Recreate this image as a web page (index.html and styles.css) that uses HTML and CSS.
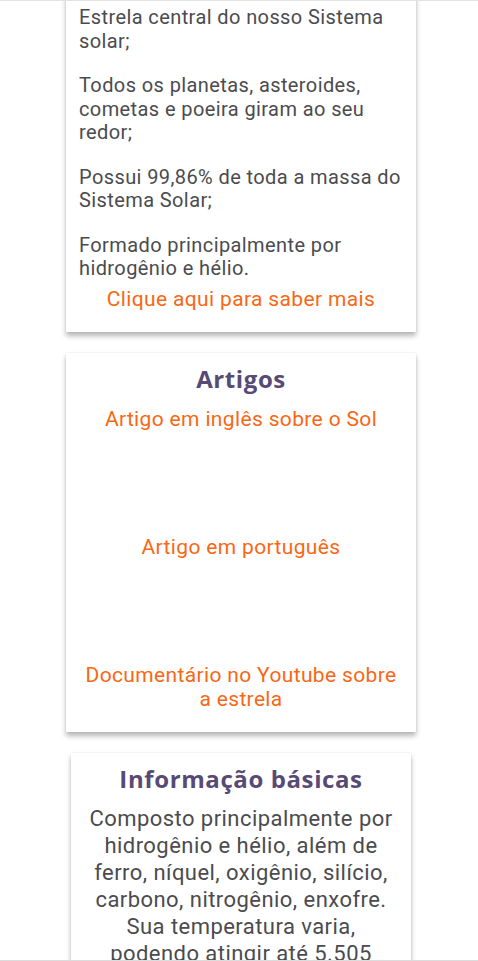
FILE: index.html
```html
<!DOCTYPE html>
<html lang="pt-BR">
<head>
<meta charset="utf-8">
<title>Sol</title>
<link rel="stylesheet" href="styles.css">
</head>
<body>
<main class="page">
  <section class="card card-facts">
    <p>Estrela central do nosso Sistema solar;</p>
    <p>Todos os planetas, asteroides, cometas e poeira giram ao seu redor;</p>
    <p>Possui 99,86% de toda a massa do Sistema Solar;</p>
    <p>Formado principalmente por hidrogênio e hélio.</p>
    <a class="link more" href="#">Clique aqui para saber mais</a>
  </section>

  <section class="card card-articles">
    <h2 class="title">Artigos</h2>
    <ul class="articles">
      <li><a class="link" href="#">Artigo em inglês sobre o Sol</a></li>
      <li><a class="link" href="#">Artigo em português</a></li>
      <li><a class="link" href="#">Documentário no Youtube sobre a estrela</a></li>
    </ul>
  </section>

  <section class="card card-info">
    <h2 class="title">Informação básicas</h2>
    <p>Composto principalmente por hidrogênio e hélio, além de ferro, níquel, oxigênio, silício, carbono, nitrogênio, enxofre. Sua temperatura varia, podendo atingir até 5.505 graus Celsius na superfície.</p>
  </section>
</main>
</body>
</html>
```

FILE: styles.css
```css
html, body {
  margin: 0;
  padding: 0;
  background: #ffffff;
}

body {
  border-top: 1px solid #e2e2e2;
  font-family: Roboto, "Liberation Sans", sans-serif;
  color: #4b4b4f;
  overflow: hidden;
  height: 960px;
}

body::after {
  content: "";
  position: fixed;
  left: 0;
  right: 0;
  bottom: 0;
  height: 1px;
  background: #dcdcdc;
}

.page {
  display: flex;
  flex-direction: column;
  align-items: center;
  gap: 21px;
  padding-left: 4px;
  margin-top: -30px;
}

.card {
  background: #fff;
  box-shadow: 0 4px 5px rgba(0, 0, 0, 0.28), 0 0 2px rgba(0, 0, 0, 0.1);
  box-sizing: border-box;
  display: flex;
  flex-direction: column;
}

.card-facts {
  width: 350px;
  padding: 35px 13px 21px;
}

.card-facts p {
  margin: 0 0 21px;
  font-size: 20px;
  line-height: 23.5px;
  letter-spacing: 0.4px;
}

.card-facts p:nth-of-type(4) {
  margin-bottom: 6px;
}

.link {
  color: #fa6714;
  text-decoration: none;
  font-size: 21px;
  line-height: 24px;
  letter-spacing: 0.35px;
  text-align: center;
}

.title {
  margin: 0;
  font-family: "Open Sans", "Noto Sans", sans-serif;
  font-weight: 700;
  font-size: 24px;
  line-height: 29px;
  letter-spacing: 0.6px;
  color: #574a75;
  text-align: center;
}

.card-articles {
  width: 350px;
  padding: 11px 13px 21px;
}

.articles {
  list-style: none;
  margin: 0;
  padding: 0;
  display: flex;
  flex-direction: column;
  gap: 104px;
  margin-top: 14px;
  text-align: center;
}

.card-info {
  width: 340px;
  padding: 11px 14px 20px;
}

.card-info p {
  margin: 12px 0 0;
  font-size: 22px;
  line-height: 27px;
  letter-spacing: 0.45px;
  text-align: center;
}
```
